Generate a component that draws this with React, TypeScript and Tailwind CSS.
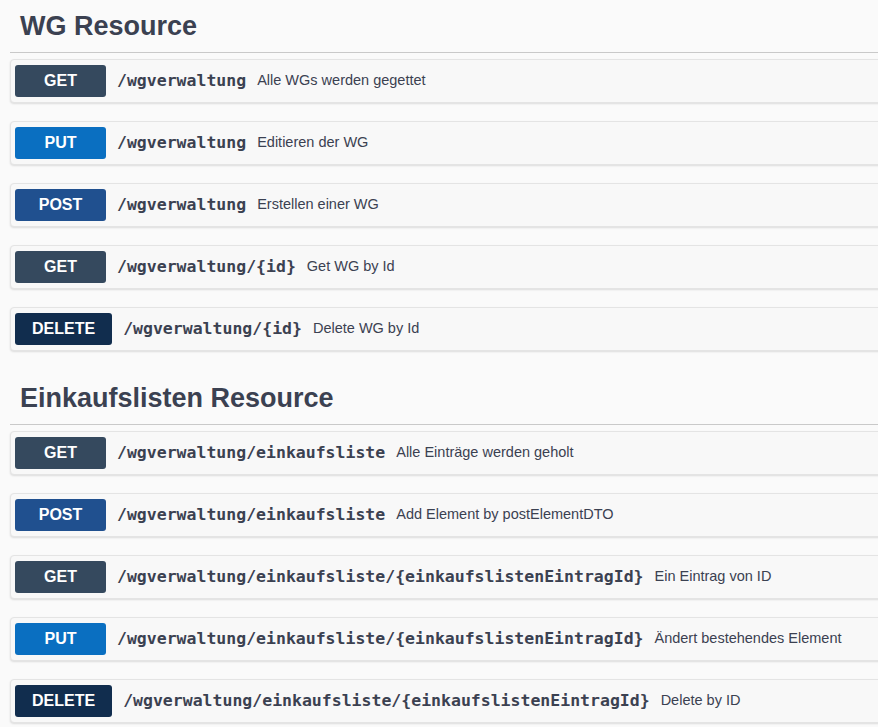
type Method = "GET" | "PUT" | "POST" | "DELETE";

type Endpoint = { method: Method; path: string; summary: string };

const badgeColor: Record<Method, string> = {
  GET: "bg-[#35495e]",
  PUT: "bg-[#0a6fc1]",
  POST: "bg-[#20508f]",
  DELETE: "bg-[#112d4e]",
};

const sections: { title: string; endpoints: Endpoint[] }[] = [
  {
    title: "WG Resource",
    endpoints: [
      { method: "GET", path: "/wgverwaltung", summary: "Alle WGs werden gegettet" },
      { method: "PUT", path: "/wgverwaltung", summary: "Editieren der WG" },
      { method: "POST", path: "/wgverwaltung", summary: "Erstellen einer WG" },
      { method: "GET", path: "/wgverwaltung/{id}", summary: "Get WG by Id" },
      { method: "DELETE", path: "/wgverwaltung/{id}", summary: "Delete WG by Id" },
    ],
  },
  {
    title: "Einkaufslisten Resource",
    endpoints: [
      { method: "GET", path: "/wgverwaltung/einkaufsliste", summary: "Alle Einträge werden geholt" },
      { method: "POST", path: "/wgverwaltung/einkaufsliste", summary: "Add Element by postElementDTO" },
      {
        method: "GET",
        path: "/wgverwaltung/einkaufsliste/{einkaufslistenEintragId}",
        summary: "Ein Eintrag von ID",
      },
      {
        method: "PUT",
        path: "/wgverwaltung/einkaufsliste/{einkaufslistenEintragId}",
        summary: "Ändert bestehendes Element",
      },
      {
        method: "DELETE",
        path: "/wgverwaltung/einkaufsliste/{einkaufslistenEintragId}",
        summary: "Delete by ID",
      },
    ],
  },
];

function Row({ ep }: { ep: Endpoint }) {
  return (
    <div className="flex h-[44px] items-center gap-[11px] rounded-[4px] border border-[#e4e4e4] bg-[#f8f8f8] pl-[4px] shadow-[0_1px_2px_rgba(0,0,0,0.12)]">
      <span
        className={`flex h-[32px] min-w-[91px] items-center justify-center rounded-[3px] px-[17px] text-[16px] font-bold text-white ${badgeColor[ep.method]}`}
      >
        {ep.method}
      </span>
      <span className="font-['DejaVu_Sans_Mono',monospace] text-[16.5px] font-bold text-[#3b4151]">
        {ep.path}
      </span>
      <span className="text-[14.5px] text-[#3b4151]">{ep.summary}</span>
    </div>
  );
}

export default function App() {
  return (
    <div className="h-[727px] w-[878px] overflow-hidden bg-[#fafafa] font-['Liberation_Sans',Arial,sans-serif]">
      <div className="w-[900px] pl-[10px]">
        {sections.map((s, i) => (
          <section key={s.title} className={i === 0 ? "" : "mt-[21px]"}>
            <h2 className="flex h-[53px] items-center border-b border-[#c9c9c9] pl-[10px] text-[27px] leading-none font-bold text-[#3b4151]">
              {s.title}
            </h2>
            <div className="mt-[6px] flex flex-col gap-[18px]">
              {s.endpoints.map((ep, j) => (
                <Row key={j} ep={ep} />
              ))}
            </div>
          </section>
        ))}
      </div>
    </div>
  );
}
